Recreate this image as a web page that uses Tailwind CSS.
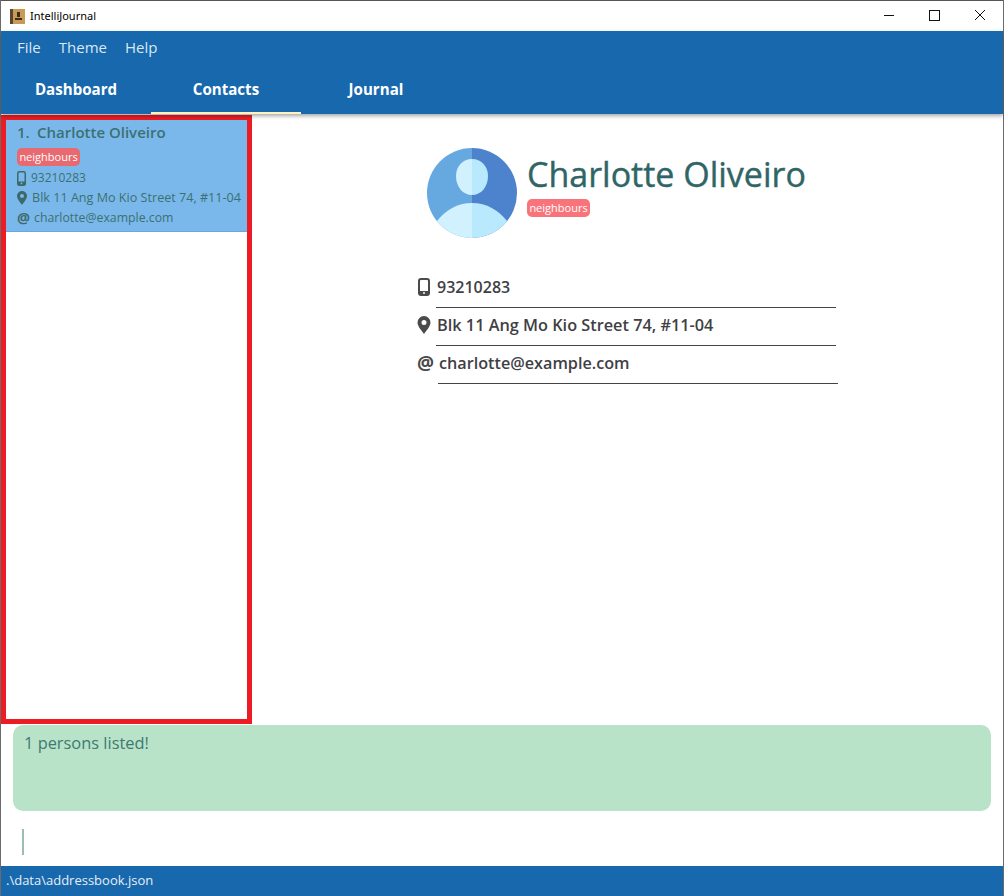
<!DOCTYPE html>
<html lang="en">
<head>
    <meta charset="UTF-8">
    <title>IntelliJournal</title>
    <script src="https://cdn.jsdelivr.net/npm/@tailwindcss/browser@4"></script>
</head>
<body class="w-[1004px] h-[896px] overflow-hidden bg-white font-['Open_Sans','Noto_Sans',sans-serif]">
<div class="h-full flex flex-col border-l border-r border-[#6b6b6b]">

    <!-- Title bar -->
    <div class="h-[31px] shrink-0 flex items-center bg-white border-t border-[#555] font-['Noto_Sans',sans-serif]">
        <svg class="ml-[9px]" width="15" height="15" viewBox="0 0 15 15">
            <rect width="15" height="15" fill="#c99a55"/>
            <rect width="3" height="15" fill="#5a4630"/>
            <rect x="7" y="3" width="3" height="5" fill="#3f2c17"/>
            <rect x="5" y="9" width="7" height="2" fill="#3f2c17"/>
        </svg>
        <span class="ml-[5px] text-[11px] text-black">IntelliJournal</span>
        <div class="ml-auto mb-[2px] flex items-center">
            <svg width="12" height="12" viewBox="0 0 12 12" class="mr-[33px]"><path d="M0 6.500H10" stroke="#111" stroke-width="1"/></svg>
            <svg width="12" height="12" viewBox="0 0 12 12" class="mr-[33px]"><rect x="0.500" y="1.500" width="10" height="10" fill="none" stroke="#111"/></svg>
            <svg width="12" height="12" viewBox="0 0 12 12" class="mr-[17px]"><path d="M1 1L11 11M11 1L1 11" stroke="#111"/></svg>
        </div>
    </div>

    <!-- Menu and tabs -->
    <div class="h-[83px] shrink-0 bg-[#1868ad] shadow-[0_2px_4px_rgba(0,0,0,0.35)] relative z-10">
        <div class="h-[32px] flex items-center pl-[16px] gap-[18px] text-[15px] text-[#dbe7f3]">
            <span>File</span>
            <span>Theme</span>
            <span>Help</span>
        </div>
        <div class="h-[51px] flex text-[15.1px] font-bold text-white">
            <div class="w-[150px] flex justify-center pt-[15px]">Dashboard</div>
            <div class="w-[150px] flex justify-center pt-[15px] border-b-2 border-[#fdf3c0]">Contacts</div>
            <div class="w-[150px] flex justify-center pt-[15px]">Journal</div>
        </div>
    </div>

    <!-- Main area -->
    <div class="h-[609px] shrink-0 flex mt-[1px]">
        <div class="w-[251px] shrink-0 border-[5px] border-[#ed1c24] bg-white">
            <div class="h-[112px] bg-[#7ab8ec] border-b border-[#69a8de] pl-[11px] text-[#3c7070]">
                <div class="h-[24px] flex items-center text-[15px] font-semibold leading-none">
                    <span class="w-[20px]">1.</span><span>Charlotte Oliveiro</span>
                </div>
                <div class="mt-[4px] h-[18px] w-[63px] flex items-center justify-center rounded-[5px] bg-[#e8696f] text-[11px] text-white">neighbours</div>
                <div class="mt-[2px] h-[20px] flex items-center text-[12px]">
                    <svg width="9" height="15" viewBox="0 0 9 15"><rect x="0.750" y="0.750" width="7.500" height="13.500" rx="1.500" fill="none" stroke="#3c6a6a" stroke-width="1.500"/><rect x="0.750" y="10.500" width="7.500" height="3.500" fill="#3c6a6a"/><circle cx="4.500" cy="12.300" r="0.900" fill="#7ab8ec"/></svg>
                    <span class="ml-[5px]">93210283</span>
                </div>
                <div class="h-[20px] flex items-center text-[12.6px] whitespace-nowrap">
                    <svg width="10" height="14" viewBox="0 0 10 14"><path fill-rule="evenodd" d="M5 0a5 5 0 0 1 5 5c0 3-3.500 6.800-5 9C3.500 11.800 0 8 0 5a5 5 0 0 1 5-5zM5 3a2 2 0 1 0 0 4 2 2 0 0 0 0-4z" fill="#3c6a6a"/></svg>
                    <span class="ml-[5px]">Blk 11 Ang Mo Kio Street 74, #11-04</span>
                </div>
                <div class="h-[20px] flex items-center text-[12.3px]">
                    <span class="w-[12px] text-[14.5px] font-bold text-[#3c6a6a]">@</span>
                    <span class="ml-[5px]">charlotte@example.com</span>
                </div>
            </div>
        </div>

        <div class="relative flex-1">
            <!-- Person details -->
            <div class="ml-[175px] mt-[33px] w-[430px]">
                <div class="flex">
                    <svg width="90" height="90" viewBox="0 0 90 90" class="shrink-0">
                        <defs><clipPath id="disc"><circle cx="45" cy="45" r="45"/></clipPath></defs>
                        <g clip-path="url(#disc)">
                            <rect width="45" height="90" fill="#65a9e0"/>
                            <rect x="45" width="45" height="90" fill="#4d82cd"/>
                            <path d="M45 55C30 55 19 62 10 73L0 90H45Z" fill="#d2f1fe"/>
                            <path d="M45 55C60 55 71 62 80 73L90 90H45Z" fill="#b9e9fc"/>
                            <path d="M45 11C35 11 29 19 29 28C29 39 36 47 45 47Z" fill="#d2f1fe"/>
                            <path d="M45 11C55 11 61 19 61 28C61 39 54 47 45 47Z" fill="#b9e9fc"/>
                        </g>
                    </svg>
                    <div class="ml-[10px]">
                        <div class="h-[51px] flex items-center text-[34px] [-webkit-text-stroke:0.4px_#2f6566] leading-none text-[#2f6566] whitespace-nowrap">Charlotte Oliveiro</div>
                        <div class="h-[18px] w-[63px] flex items-center justify-center rounded-[5px] bg-[#f8747a] text-[11px] text-white">neighbours</div>
                    </div>
                </div>
                <div class="mt-[30px] text-[16px] font-semibold text-[#3f3f46] whitespace-nowrap">
                    <div class="h-[38px] flex items-center">
                        <svg width="12" height="18" viewBox="0 0 12 18" class="ml-[-9px]"><rect x="1" y="1" width="10" height="16" rx="2" fill="none" stroke="#4a4a4a" stroke-width="2"/><rect x="1" y="13" width="10" height="4" fill="#4a4a4a"/><circle cx="6" cy="15" r="1" fill="#fff"/></svg>
                        <span class="ml-[7px]">93210283</span>
                    </div>
                    <div class="h-[38px] flex items-center text-[16.3px]">
                        <svg width="14" height="18" viewBox="0 0 14 18" class="ml-[-10px]"><path fill-rule="evenodd" d="M7 0a6.500 6.500 0 0 1 6.500 6.500C13.500 10.500 9 15 7 18 5 15 .5 10.500.5 6.500A6.500 6.500 0 0 1 7 0zM7 4a2.500 2.500 0 1 0 0 5 2.500 2.500 0 0 0 0-5z" fill="#4a4a4a"/></svg>
                        <span class="ml-[6px]">Blk 11 Ang Mo Kio Street 74, #11-04</span>
                    </div>
                    <div class="h-[38px] flex items-center text-[16.2px]">
                        <span class="ml-[-10px] w-[16px] text-[19px] leading-none font-bold text-[#4a4a4a]">@</span>
                        <span class="ml-[6px]">charlotte@example.com</span>
                    </div>
                </div>
            </div>
            <!-- Row rules -->
            <div class="absolute left-[184px] top-[192px] w-[400px] h-px bg-[#444]"></div>
            <div class="absolute left-[184px] top-[230px] w-[400px] h-px bg-[#444]"></div>
            <div class="absolute left-[186px] top-[268px] w-[400px] h-px bg-[#444]"></div>
        </div>
    </div>

    <!-- Command result -->
    <div class="h-[86px] shrink-0 ml-[12px] mr-[12px] mt-[1px] rounded-[10px] bg-[#b9e3c9] px-[11px] pt-[6px] text-[16.4px] text-[#3d7a70]">1 persons listed!</div>

    <!-- Command box -->
    <div class="h-[55px] shrink-0 pl-[21px] pt-[18px]">
        <div class="w-[2px] h-[26px] bg-[#9dbdb4]"></div>
    </div>

    <!-- Status bar -->
    <div class="h-[30px] shrink-0 bg-[#1868ad] pl-[5px] flex items-center text-[13px] text-[#e6eef6]">.\data\addressbook.json</div>
</div>
</body>
</html>
